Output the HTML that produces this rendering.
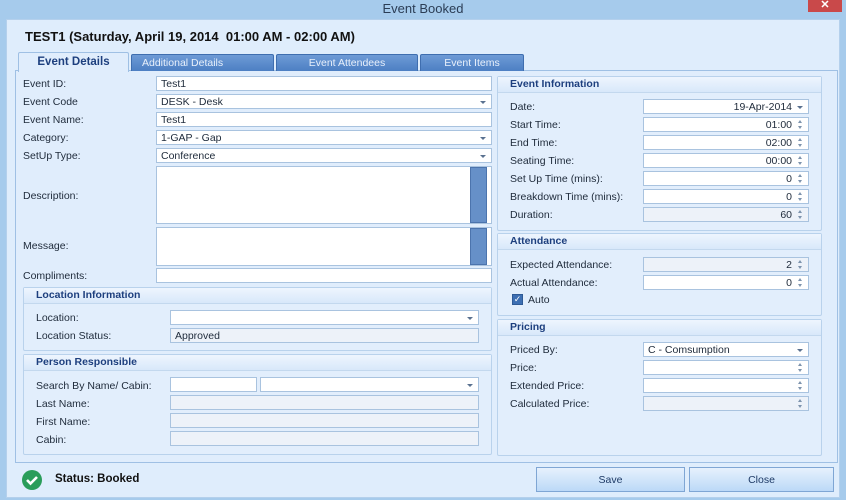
<!DOCTYPE html><html><head><style>
*{box-sizing:border-box;margin:0;padding:0}
body{width:846px;height:500px;background:#a6cbec;font-family:"Liberation Sans",sans-serif;font-size:10.5px;color:#1e2a3a;position:relative;overflow:hidden}
.a{position:absolute}
.win{left:6px;top:19px;width:834px;height:479px;background:#dfedfc;border:1px solid #b4d0ec}
.lbl{position:absolute;white-space:nowrap}
.in{position:absolute;background:#fff;border:1px solid #a9c3df;height:15px;padding:1px 4px;white-space:nowrap;font-size:10.5px}
.dis{background:#edf2f9}
.dd::after{content:"";position:absolute;right:5px;top:6px;border-left:3px solid transparent;border-right:3px solid transparent;border-top:3px solid #5a7190}
.sp::before{content:"";position:absolute;right:6px;top:2px;border-left:2.5px solid transparent;border-right:2.5px solid transparent;border-bottom:3px solid #7d93ad}
.sp::after{content:"";position:absolute;right:6px;top:8px;border-left:2.5px solid transparent;border-right:2.5px solid transparent;border-top:3px solid #7d93ad}
.r{text-align:right;padding-right:16px}
.grp{position:absolute;border:1px solid #b9d2ec;background:#e2eefc;border-radius:2px}
.gh{height:16px;background:linear-gradient(#eef5fe,#d8e8fa);border-bottom:1px solid #c3d8ee;font-weight:bold;color:#1d3f7e;padding:1px 12px;font-size:10.5px}
.tab{position:absolute;top:54px;height:17px;background:linear-gradient(#6e9bd6,#4d7fc3);color:#e8f0fb;border:1px solid #3f6eaf;border-bottom:none;text-align:center;font-size:10.5px;padding-top:2px;border-radius:2px 2px 0 0}
.sb{position:absolute;width:17px;background:#6690c8;border:1px solid #4c74ad}
.btn{position:absolute;top:467px;height:25px;background:linear-gradient(#e6f1fd,#bcd9f7);border:1px solid #7fa6d4;text-align:center;padding-top:6px;color:#1e3a66}
</style></head><body>
<div class="a" style="left:0;top:0;width:846px;text-align:center;font-size:13px;color:#2b3d55;top:1px">Event Booked</div>
<div class="a" style="left:808px;top:0;width:34px;height:12px;background:#c9494a;color:#fff;text-align:center;font-size:11px;line-height:11px;font-weight:bold">✕</div>
<div class="a win"></div>
<div class="lbl" style="left:25px;top:29px;font-size:13px;font-weight:bold;color:#111">TEST1 (Saturday, April 19, 2014&nbsp; 01:00 AM - 02:00 AM)</div>
<div class="a" style="left:15px;top:70px;width:823px;height:393px;border:1px solid #9fc0e4;background:#e0edfc"></div>
<div class="tab" style="left:18px;width:111px;top:52px;height:20px;background:#e0edfc;border-color:#9fc0e4;color:#1d3f7e;font-weight:bold;font-size:11.5px;padding-top:3px">Event Details</div>
<div class="tab" style="left:131px;width:143px;text-align:left;padding-left:10px">Additional Details</div>
<div class="tab" style="left:276px;width:142px">Event Attendees</div>
<div class="tab" style="left:420px;width:104px">Event Items</div>

<div class="lbl" style="left:23px;top:78px">Event ID:</div><div class="in" style="left:156px;top:76px;width:336px">Test1</div>
<div class="lbl" style="left:23px;top:96px">Event Code</div><div class="in dd" style="left:156px;top:94px;width:336px">DESK - Desk</div>
<div class="lbl" style="left:23px;top:114px">Event Name:</div><div class="in" style="left:156px;top:112px;width:336px">Test1</div>
<div class="lbl" style="left:23px;top:132px">Category:</div><div class="in dd" style="left:156px;top:130px;width:336px">1-GAP - Gap</div>
<div class="lbl" style="left:23px;top:150px">SetUp Type:</div><div class="in dd" style="left:156px;top:148px;width:336px">Conference</div>
<div class="lbl" style="left:23px;top:190px">Description:</div><div class="in" style="left:156px;top:166px;width:336px;height:58px"></div><div class="sb" style="left:470px;top:167px;height:56px"></div>
<div class="lbl" style="left:23px;top:240px">Message:</div><div class="in" style="left:156px;top:227px;width:336px;height:39px"></div><div class="sb" style="left:470px;top:228px;height:37px"></div>
<div class="lbl" style="left:23px;top:270px">Compliments:</div><div class="in" style="left:156px;top:268px;width:336px"></div>

<div class="grp" style="left:23px;top:287px;width:469px;height:64px"><div class="gh">Location Information</div></div>
<div class="lbl" style="left:36px;top:312px">Location:</div><div class="in dd" style="left:170px;top:310px;width:309px"></div>
<div class="lbl" style="left:36px;top:330px">Location Status:</div><div class="in dis" style="left:170px;top:328px;width:309px">Approved</div>

<div class="grp" style="left:23px;top:354px;width:469px;height:101px"><div class="gh">Person Responsible</div></div>
<div class="lbl" style="left:36px;top:380px">Search By Name/ Cabin:</div><div class="in" style="left:170px;top:377px;width:87px"></div><div class="in dd" style="left:260px;top:377px;width:219px"></div>
<div class="lbl" style="left:36px;top:398px">Last Name:</div><div class="in dis" style="left:170px;top:395px;width:309px"></div>
<div class="lbl" style="left:36px;top:416px">First Name:</div><div class="in dis" style="left:170px;top:413px;width:309px"></div>
<div class="lbl" style="left:36px;top:434px">Cabin:</div><div class="in dis" style="left:170px;top:431px;width:309px"></div>

<div class="grp" style="left:497px;top:76px;width:325px;height:155px"><div class="gh">Event Information</div></div>
<div class="lbl" style="left:510px;top:101px">Date:</div><div class="in dd r" style="left:643px;top:99px;width:166px">19-Apr-2014</div>
<div class="lbl" style="left:510px;top:119px">Start Time:</div><div class="in sp r" style="left:643px;top:117px;width:166px">01:00</div>
<div class="lbl" style="left:510px;top:137px">End Time:</div><div class="in sp r" style="left:643px;top:135px;width:166px">02:00</div>
<div class="lbl" style="left:510px;top:155px">Seating Time:</div><div class="in sp r" style="left:643px;top:153px;width:166px">00:00</div>
<div class="lbl" style="left:510px;top:173px">Set Up Time (mins):</div><div class="in sp r" style="left:643px;top:171px;width:166px">0</div>
<div class="lbl" style="left:510px;top:191px">Breakdown Time (mins):</div><div class="in sp r" style="left:643px;top:189px;width:166px">0</div>
<div class="lbl" style="left:510px;top:209px">Duration:</div><div class="in sp r dis" style="left:643px;top:207px;width:166px">60</div>

<div class="grp" style="left:497px;top:233px;width:325px;height:83px"><div class="gh">Attendance</div></div>
<div class="lbl" style="left:510px;top:259px">Expected Attendance:</div><div class="in sp r dis" style="left:643px;top:257px;width:166px">2</div>
<div class="lbl" style="left:510px;top:277px">Actual Attendance:</div><div class="in sp r" style="left:643px;top:275px;width:166px">0</div>
<div class="a" style="left:512px;top:294px;width:11px;height:11px;background:#3d6fb3;border:1px solid #2e5a96;color:#fff;font-size:9px;line-height:9px;text-align:center">✓</div><div class="lbl" style="left:528px;top:294px">Auto</div>

<div class="grp" style="left:497px;top:319px;width:325px;height:137px"><div class="gh">Pricing</div></div>
<div class="lbl" style="left:510px;top:344px">Priced By:</div><div class="in dd" style="left:643px;top:342px;width:166px">C - Comsumption</div>
<div class="lbl" style="left:510px;top:362px">Price:</div><div class="in sp" style="left:643px;top:360px;width:166px"></div>
<div class="lbl" style="left:510px;top:380px">Extended Price:</div><div class="in sp" style="left:643px;top:378px;width:166px"></div>
<div class="lbl" style="left:510px;top:398px">Calculated Price:</div><div class="in sp dis" style="left:643px;top:396px;width:166px"></div>

<svg class="a" style="left:20px;top:469px" width="26" height="22"><circle cx="12" cy="11" r="10" fill="#2a9d5a"/><path d="M7 11l3.5 3.5L17 8" stroke="#fff" stroke-width="2.6" fill="none"/></svg>
<div class="lbl" style="left:55px;top:473px;font-size:11.5px;font-weight:bold;color:#111">Status: Booked</div>
<div class="btn" style="left:536px;width:149px">Save</div>
<div class="btn" style="left:689px;width:145px">Close</div>
</body></html>
